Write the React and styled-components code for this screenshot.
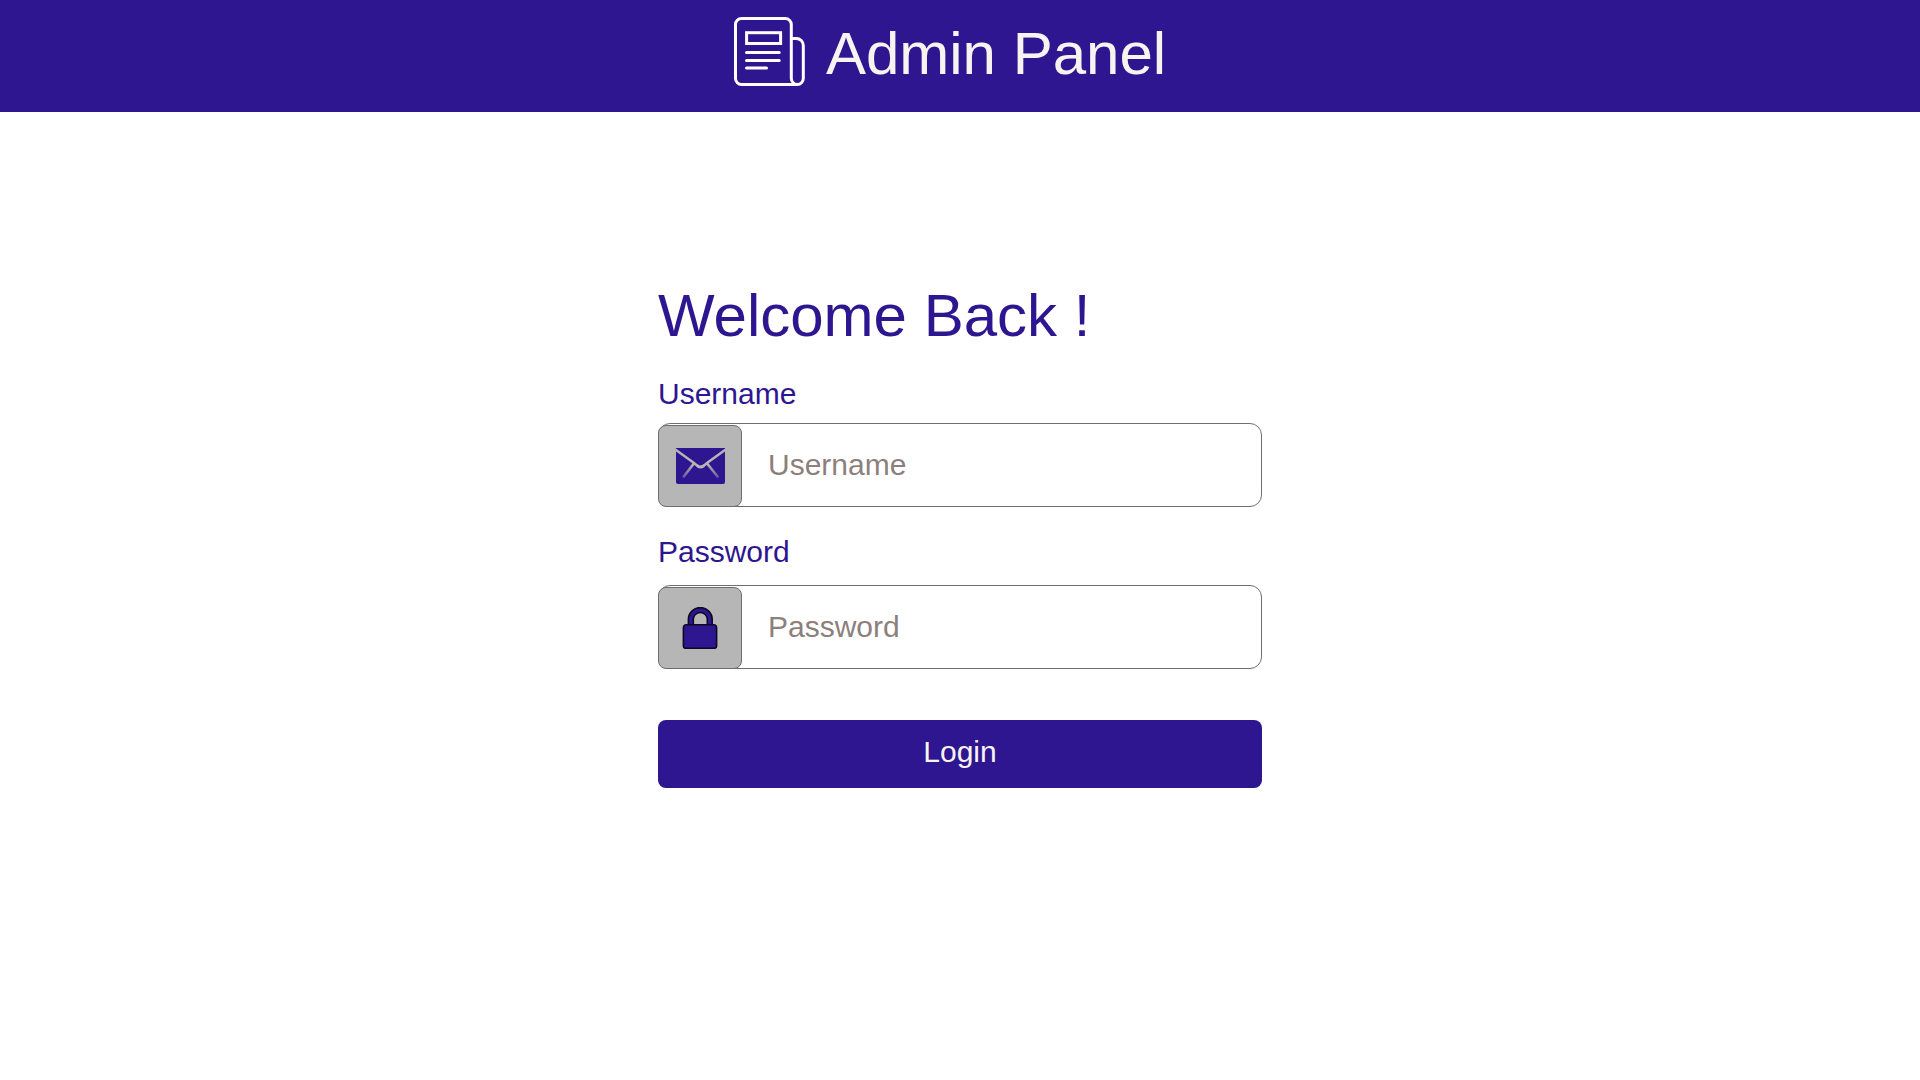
import React from "react";
import styled, { createGlobalStyle } from "styled-components";

const GlobalStyle = createGlobalStyle`
  *, *::before, *::after { box-sizing: border-box; }
  body {
    margin: 0;
    background: #fff;
    color: #2d168f;
    font-family: "Liberation Sans", Arial, Helvetica, sans-serif;
  }
`;

const Header = styled.header`
  display: flex;
  align-items: center;
  justify-content: center;
  gap: 20px;
  min-height: 112px;
  padding: 0 20px 4px 0;
  background: #2d168f;
  color: #f8f3f1;
`;

const Title = styled.div`
  font-size: 60px;
  line-height: 72px;
`;

const Main = styled.main`
  display: flex;
  justify-content: center;
  padding: 168px 16px 64px;
`;

const Form = styled.form`
  display: flex;
  flex-direction: column;
  width: 100%;
  max-width: 604px;
`;

const Heading = styled.h1`
  margin: 0 0 24px;
  font-size: 60px;
  font-weight: 400;
  line-height: 72px;
`;

const Field = styled.div`
  display: flex;
  flex-direction: column;
  gap: ${({ $gap }) => $gap}px;
  margin-bottom: ${({ $after }) => $after}px;
`;

const Label = styled.label`
  font-size: 30px;
  line-height: 36px;
`;

const InputGroup = styled.div`
  display: flex;
  height: 84px;
  border: 1px solid #6e6e6e;
  border-radius: 12px;
`;

const IconTile = styled.span`
  display: flex;
  flex: none;
  align-items: center;
  justify-content: center;
  width: 84px;
  margin: 1px 0 -1px -1px;
  border: 1px solid #6e6e6e;
  border-radius: 8px;
  background: #b6b6b6;
`;

const Input = styled.input`
  flex: 1;
  min-width: 0;
  padding: 0 26px;
  border: 0;
  border-radius: 12px;
  outline: none;
  background: transparent;
  color: #2d168f;
  font-family: inherit;
  font-size: 30px;

  &::placeholder {
    color: #8c7f7c;
    opacity: 1;
  }
`;

const LoginButton = styled.button`
  height: 68px;
  padding: 0 16px 4px;
  border: 0;
  border-radius: 8px;
  background: #2d168f;
  color: #f8f3f1;
  font-family: inherit;
  font-size: 30px;
  line-height: 36px;
  cursor: pointer;
`;

const NewspaperIcon = () => (
  <svg width="72" height="74" viewBox="0 0 72 74" fill="none" stroke="#fff" strokeWidth="3" strokeLinecap="round" aria-hidden="true">
    <path d="M63.3 67.5H7.5a6 6 0 0 1-6-6v-54a6 6 0 0 1 6-6h43.8a6 6 0 0 1 6 6v54a6 6 0 0 0 12 0v-33a7 7 0 0 0-7-7h-5" />
    <rect x="12.6" y="15.7" width="34" height="10.8" strokeLinejoin="miter" />
    <path d="M12.5 35.6h32.7M12.5 43.4h32.7M12.5 51h20" />
  </svg>
);

const MailIcon = () => (
  <svg width="49" height="36" viewBox="0 0 49 36" fill="none" strokeLinecap="round" aria-hidden="true">
    <defs>
      <linearGradient id="fold" gradientUnits="userSpaceOnUse" x1="0" y1="16" x2="0" y2="30">
        <stop offset="0" stopColor="#b6b6b6" />
        <stop offset="1" stopColor="#b6b6b6" stopOpacity="0.4" />
      </linearGradient>
    </defs>
    <path d="M0 0h49v34a2 2 0 0 1-2 2H2a2 2 0 0 1-2-2z" fill="#2d168f" />
    <path d="M0 2L18 15Q22 18.7 24.5 18.7T31 15L49 2" stroke="#b6b6b6" strokeWidth="2.4" />
    <path d="M21.5 18.2Q24.5 20.2 27.5 18.2" stroke="#b6b6b6" strokeWidth="2.4" />
    <path d="M17.5 16L7.8 28.5M31.5 16l10 12.5" stroke="url(#fold)" strokeWidth="2.6" />
  </svg>
);

const LockIcon = () => (
  <svg width="36" height="42" viewBox="0 0 36 42" fill="#2d168f" stroke="#0c0824" strokeWidth="1.6" aria-hidden="true">
    <path fillRule="evenodd" d="M6.4 20V12.5a11.9 11.9 0 0 1 23.8 0V20zM11.3 17.8h14V12.5a7 7 0 0 0-14 0z" />
    <path d="M4.2 17.7h27.4a3 3 0 0 1 3 3V39a2.3 2.3 0 0 1-2.3 2.3H3.7A2.3 2.3 0 0 1 1.4 39V20.5a2.8 2.8 0 0 1 2.8-2.8z" />
  </svg>
);

export default function App() {
  return (
    <>
      <GlobalStyle />
      <Header>
        <NewspaperIcon />
        <Title>Admin Panel</Title>
      </Header>
      <Main>
        <Form onSubmit={(event) => event.preventDefault()}>
          <Heading>Welcome Back !</Heading>
          <Field $gap={11} $after={27}>
            <Label htmlFor="username">Username</Label>
            <InputGroup>
              <IconTile><MailIcon /></IconTile>
              <Input id="username" type="text" placeholder="Username" autoComplete="username" />
            </InputGroup>
          </Field>
          <Field $gap={15} $after={51}>
            <Label htmlFor="password">Password</Label>
            <InputGroup>
              <IconTile><LockIcon /></IconTile>
              <Input id="password" type="password" placeholder="Password" autoComplete="current-password" />
            </InputGroup>
          </Field>
          <LoginButton type="submit">Login</LoginButton>
        </Form>
      </Main>
    </>
  );
}
